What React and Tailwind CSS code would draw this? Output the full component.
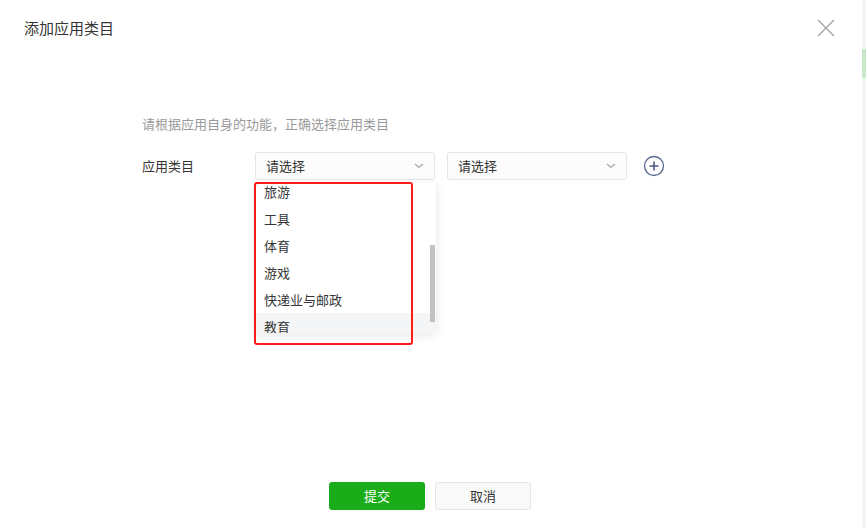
import React from "react";

const font = { fontFamily: '"Noto Sans CJK SC", "Noto Sans", sans-serif' };

function Chevron() {
  return (
    <svg width="10" height="6" viewBox="0 0 10 6" fill="none">
      <path d="M1 1 L5 4.5 L9 1" stroke="#a8a8a8" strokeWidth="1.3" />
    </svg>
  );
}

function Select({ children }) {
  return (
    <div className="w-[180px] h-[28px] border border-[#e4e5e7] rounded-[3px] bg-[#fcfcfc] flex items-center justify-between pl-[10px] pr-[10px] text-[13px] text-[#353535]">
      <span>请选择</span>
      <Chevron />
      {children}
    </div>
  );
}

export default function App() {
  const items = ["旅游", "工具", "体育", "游戏", "快递业与邮政", "教育"];
  return (
    <div className="w-[866px] h-[528px] bg-white flex overflow-hidden" style={font}>
      <div className="flex-1 flex flex-col">
        <div className="h-[56px] flex items-center justify-between pl-[24px] pr-[27px]">
          <span className="text-[15px] text-[#353535]">添加应用类目</span>
          <svg width="18" height="18" viewBox="0 0 18 18" fill="none">
            <path d="M1 1 L17 17 M17 1 L1 17" stroke="#a5a5a5" strokeWidth="1.4" />
          </svg>
        </div>
        <div className="pl-[142px] mt-[59px]">
          <div className="text-[13px] leading-[18px] text-[#9a9a9a]">
            请根据应用自身的功能，正确选择应用类目
          </div>
          <div className="flex items-center mt-[19px]">
            <div className="w-[113px] text-[13px] text-[#353535]">应用类目</div>
            <div className="relative">
              <Select />
              <div className="absolute left-0 top-[31px] w-[181px] h-[150px] bg-white overflow-hidden shadow-[0_2px_10px_rgba(0,0,0,0.1)] z-10">
                <div className="-mt-[5px]">
                  {items.map((it, i) => (
                    <div
                      key={it}
                      className={
                        "h-[27px] flex items-center pl-[9px] text-[13px] text-[#353535] " +
                        (i === items.length - 1 ? "bg-[#f4f5f7]" : "")
                      }
                    >
                      {it}
                    </div>
                  ))}
                </div>
                <div className="absolute right-[1px] top-[62px] w-[5px] h-[77px] bg-[#c1c1c1]" />
              </div>
              <div className="absolute -left-[1px] top-[30px] w-[159px] h-[163px] border-2 border-[#ff1a1a] rounded-[3px] z-20" />
            </div>
            <div className="ml-[12px]">
              <Select />
            </div>
            <svg className="ml-[16px]" width="22" height="22" viewBox="0 0 22 22" fill="none">
              <circle cx="11" cy="11" r="9.5" stroke="#5a6890" strokeWidth="1.3" />
              <path d="M11 6.5 V15.5 M6.5 11 H15.5" stroke="#4a5883" strokeWidth="1.6" />
            </svg>
          </div>
        </div>
        <div className="mt-auto pb-[18px] pr-[2px] flex justify-center gap-[10px]">
          <button className="w-[96px] h-[28px] rounded-[3px] bg-[#1aad19] text-white text-[13px]">
            提交
          </button>
          <button className="w-[96px] h-[28px] rounded-[3px] bg-[#fafafa] border border-[#e4e5e7] text-[#353535] text-[13px]">
            取消
          </button>
        </div>
      </div>
      <div className="w-[4px] bg-[#f4f5f7] flex flex-col">
        <div className="mt-[49px] h-[29px] bg-[#c9e8c9]" />
      </div>
    </div>
  );
}
